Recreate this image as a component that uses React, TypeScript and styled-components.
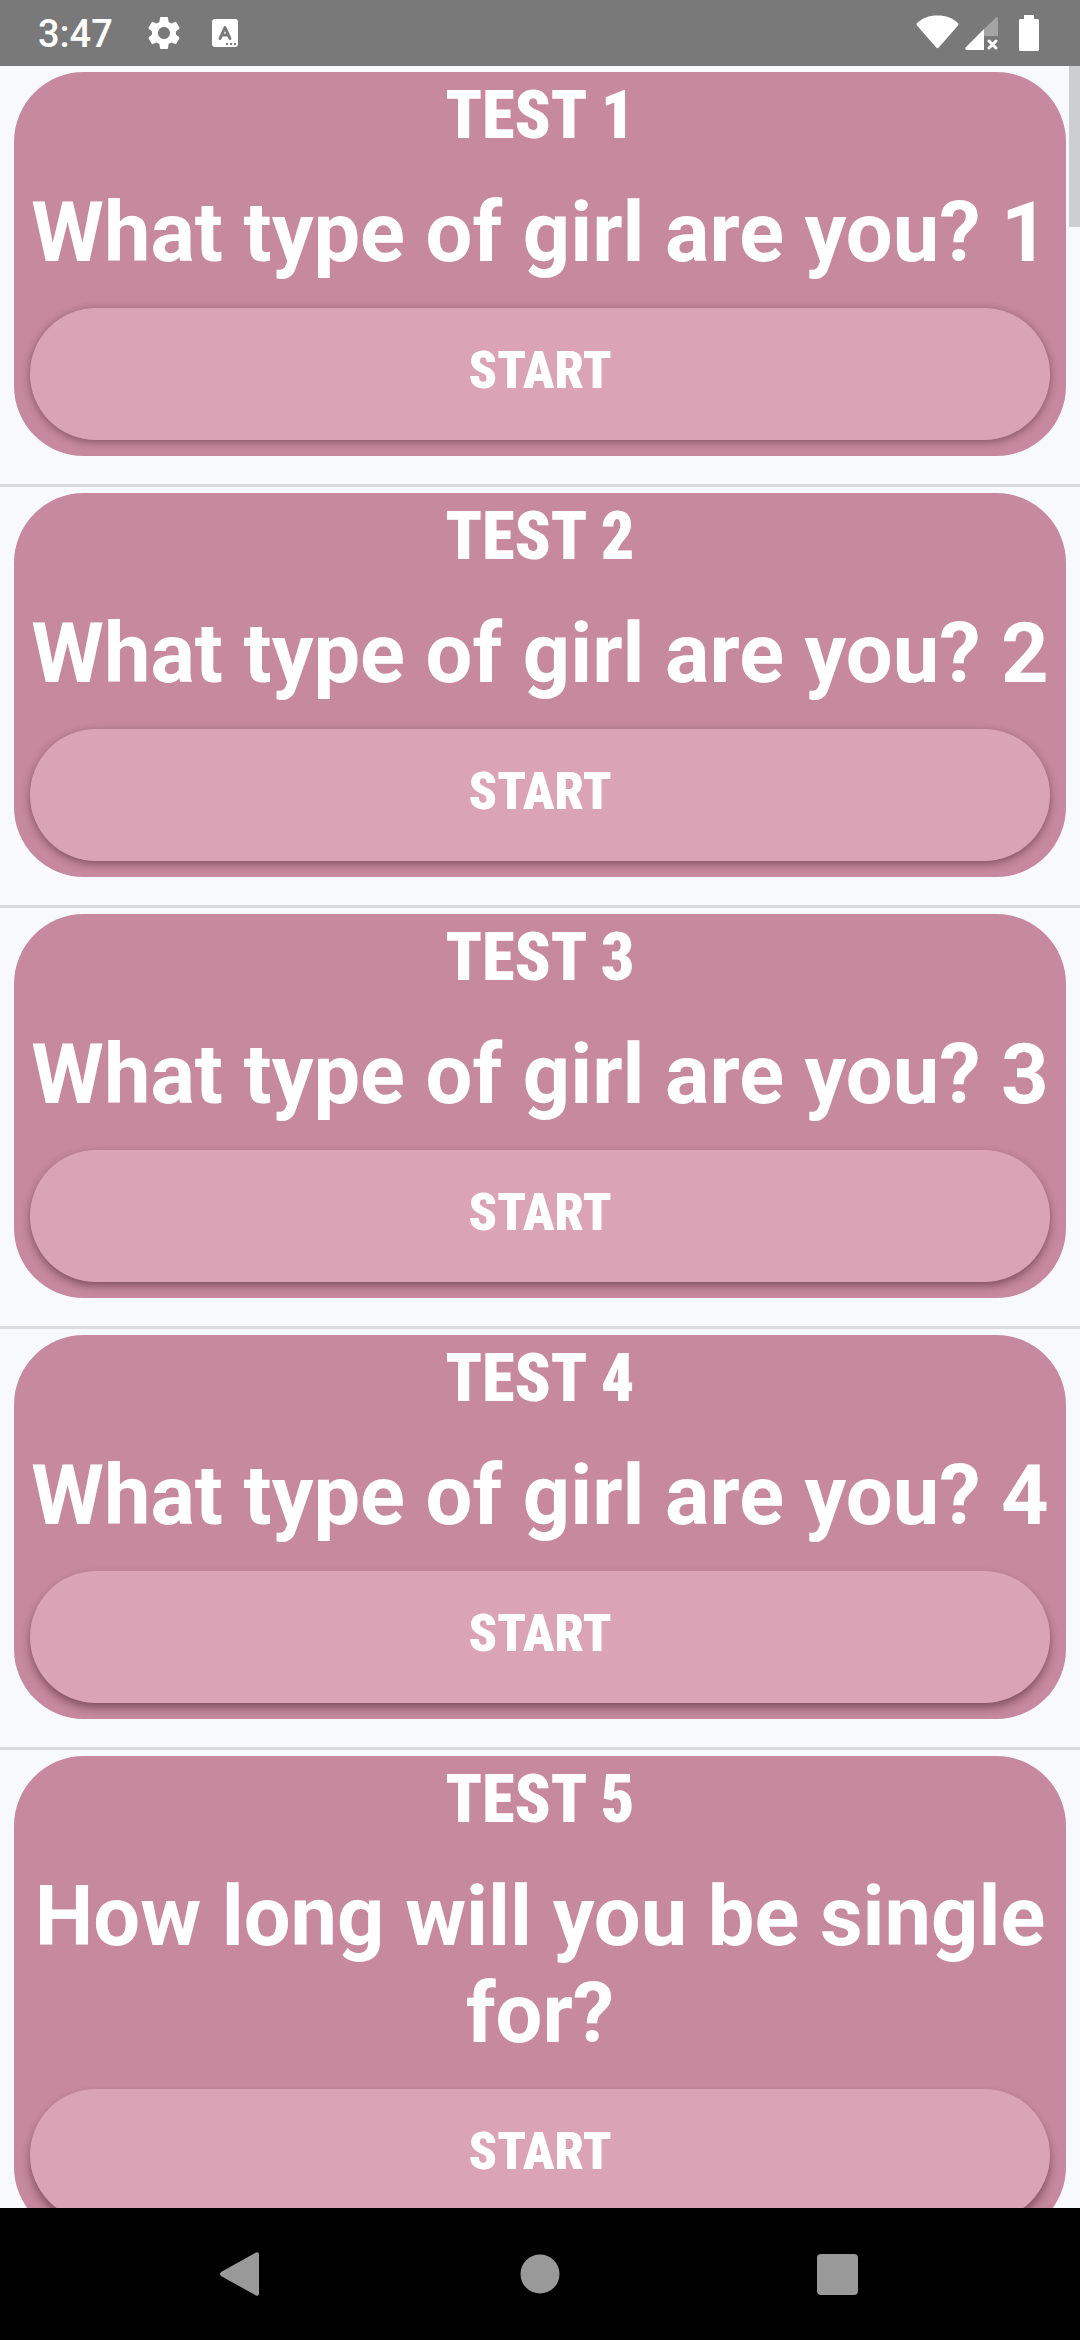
import React from "react";
import styled, { createGlobalStyle } from "styled-components";

const GlobalStyle = createGlobalStyle`
  *, *::before, *::after { box-sizing: border-box; }
  body { margin: 0; background: #f8f9fb; }
`;

const displayFont = `"Roboto Condensed", "Liberation Sans Narrow", "Open Sans Condensed", Roboto, sans-serif`;

const Screen = styled.div`
  display: flex;
  flex-direction: column;
  height: 100vh;
  overflow: hidden;
  font-family: Roboto, "Noto Sans", sans-serif;
  color: #fff;
`;

const StatusBar = styled.header`
  display: flex;
  flex: none;
  align-items: center;
  justify-content: space-between;
  height: 66px;
  padding: 0 38px;
  background: #797979;
`;

const StatusGroup = styled.div`
  display: flex;
  align-items: center;
`;

const Clock = styled.time`
  width: 104px;
  padding-top: 2px;
  font-size: 38px;
  line-height: 48px;
  font-weight: 500;
`;

const StatusIcon = styled.svg<{ $gap: number }>`
  display: block;
  height: 40px;
  margin-left: ${(p) => p.$gap}px;
`;

const Viewport = styled.main`
  position: relative;
  flex: 1;
  min-height: 0;
`;

const List = styled.ul`
  height: 100%;
  margin: 0;
  padding: 0;
  list-style: none;
  overflow-y: auto;
  scrollbar-width: none;
`;

const ScrollThumb = styled.div`
  position: absolute;
  top: 0;
  right: 0;
  width: 11px;
  height: 161px;
  background: #cdcecf;
`;

const Item = styled.li`
  padding: 6px 14px 28px;
  border-bottom: 3px solid #d9dbdd;
`;

const Card = styled.article`
  display: flex;
  flex-direction: column;
  padding: 8px 16px 16px;
  border-radius: 70px;
  background: #c6899d;
  text-align: center;
`;

const Title = styled.h2`
  margin: 0;
  font-family: ${displayFont};
  font-size: 66px;
  line-height: 72px;
  font-weight: 900;
`;

const Question = styled.p`
  margin: 32px 0 27px;
  font-size: 83px;
  line-height: 97px;
  font-weight: 700;
`;

const StartButton = styled.button<{ $drop: number }>`
  height: 132px;
  padding: 0 0 6px;
  border: 0;
  border-radius: 66px;
  background: #dba3b6;
  box-shadow: 0 ${(p) => p.$drop}px 8px rgba(50, 15, 30, 0.45);
  color: #fff;
  font-family: ${displayFont};
  font-size: 52px;
  line-height: 64px;
  font-weight: 900;
  cursor: pointer;
`;

const NavBar = styled.nav`
  display: flex;
  flex: none;
  justify-content: center;
  height: 132px;
  background: #000;
`;

const NavButton = styled.button`
  display: flex;
  flex: 0 1 297px;
  align-items: center;
  justify-content: center;
  padding: 0;
  border: 0;
  background: transparent;
  color: #999;
  cursor: pointer;
`;

const tests = [
  "What type of girl are you? 1",
  "What type of girl are you? 2",
  "What type of girl are you? 3",
  "What type of girl are you? 4",
  "How long will you be single for?",
];

export default function App() {
  return (
    <Screen>
      <GlobalStyle />
      <StatusBar>
        <StatusGroup>
          <Clock>3:47</Clock>
          <StatusIcon $gap={2} width="40" viewBox="0 0 24 24" fill="#fff" aria-hidden="true">
            <path d="M19.14 12.94c.04-.3.06-.61.06-.94 0-.32-.02-.64-.07-.94l2.03-1.58c.18-.14.23-.41.12-.61l-1.92-3.32c-.12-.22-.37-.29-.59-.22l-2.39.96c-.5-.38-1.03-.7-1.62-.94l-.36-2.54c-.04-.24-.24-.41-.48-.41h-3.84c-.24 0-.43.17-.47.41l-.36 2.54c-.59.24-1.13.57-1.62.94l-2.39-.96c-.22-.08-.47 0-.59.22L2.74 8.87c-.12.21-.08.47.12.61l2.03 1.58c-.05.3-.09.63-.09.94s.02.64.07.94l-2.03 1.58c-.18.14-.23.41-.12.61l1.92 3.32c.12.22.37.29.59.22l2.39-.96c.5.38 1.03.7 1.62.94l.36 2.54c.05.24.24.41.48.41h3.84c.24 0 .44-.17.47-.41l.36-2.54c.59-.24 1.13-.56 1.62-.94l2.39.96c.22.08.47 0 .59-.22l1.92-3.32c.12-.22.07-.47-.12-.61l-2.01-1.58zM12 15.6c-1.98 0-3.6-1.62-3.6-3.6s1.62-3.6 3.6-3.6 3.6 1.62 3.6 3.6-1.62 3.6-3.6 3.6z" />
          </StatusIcon>
          <StatusIcon $gap={28} width="26" viewBox="0 0 26 40" aria-hidden="true">
            <rect x="0" y="6" width="26" height="28" rx="3" fill="#fff" />
            <path d="M8 25.500L13 14.500L18 25.500M9.800 22H16.200" fill="none" stroke="#797979" strokeWidth="3" strokeLinecap="round" strokeLinejoin="round" />
            <path d="M14 30h2v2h-2zM18 30h2v2h-2zM22 30h2v2h-2z" fill="#797979" />
          </StatusIcon>
        </StatusGroup>
        <StatusGroup>
          <StatusIcon $gap={0} width="43" viewBox="0 0 43 40" fill="#fff" aria-hidden="true">
            <path d="M.8 10.500C6 5 13 2.500 21.500 2.500S37 5 42.200 10.500Q42.800 11.500 42 12.500L23 34.300Q21.500 36 20 34.300L1 12.500Q.2 11.500.8 10.500Z" />
          </StatusIcon>
          <StatusIcon $gap={6} width="33" viewBox="0 0 33 40" aria-hidden="true">
            <path d="M19 16L31 4.500Q33 3.500 33 5.500V23H19Z" fill="#a4a4a4" />
            <path d="M19 16V37H1.500Q-.5 36.500.6 34.500Z" fill="#fff" />
            <path d="M24 28L31 35M31 28L24 35" stroke="#fff" strokeWidth="3" strokeLinecap="round" />
          </StatusIcon>
          <StatusIcon $gap={21} width="23" viewBox="0 0 23 40" fill="#fff" aria-hidden="true">
            <path d="M5 2H15V6H18.500Q20 6 20 7.500V36.500Q20 38 18.500 38H1.500Q0 38 0 36.500V7.500Q0 6 1.500 6H5Z" />
          </StatusIcon>
        </StatusGroup>
      </StatusBar>
      <Viewport>
        <List>
          {tests.map((question, i) => (
            <Item key={question}>
              <Card>
                <Title>TEST {i + 1}</Title>
                <Question>{question}</Question>
                <StartButton type="button" $drop={2 + i}>
                  START
                </StartButton>
              </Card>
            </Item>
          ))}
        </List>
        <ScrollThumb />
      </Viewport>
      <NavBar>
        <NavButton type="button" aria-label="Back">
          <svg width="60" height="60" viewBox="0 0 60 60" fill="currentColor">
            <path d="M43 8.500Q46 7.500 46 10.500V49.500Q46 52.500 43 51.500L8 32Q6 30 8 28Z" />
          </svg>
        </NavButton>
        <NavButton type="button" aria-label="Home">
          <svg width="60" height="60" viewBox="0 0 60 60" fill="currentColor">
            <circle cx="30" cy="30" r="19.500" />
          </svg>
        </NavButton>
        <NavButton type="button" aria-label="Recent apps">
          <svg width="60" height="60" viewBox="0 0 60 60" fill="currentColor">
            <rect x="10" y="10" width="41" height="41" rx="4" />
          </svg>
        </NavButton>
      </NavBar>
    </Screen>
  );
}
